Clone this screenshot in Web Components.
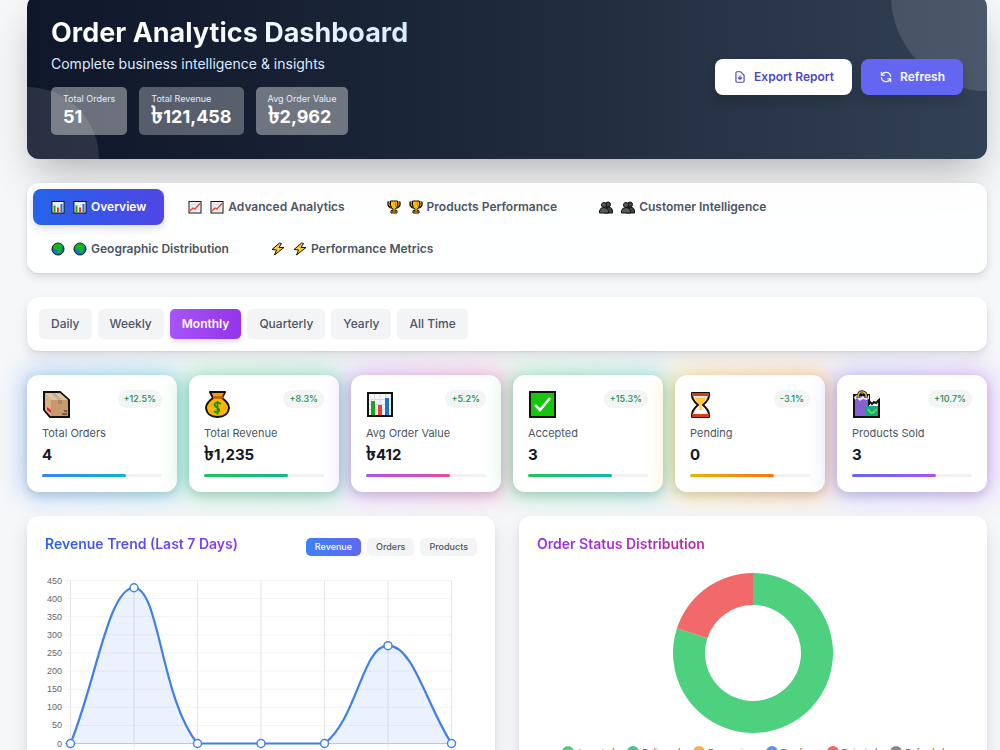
<!DOCTYPE html>
<html lang="en">
<head>
<meta charset="utf-8">
<meta name="viewport" content="width=device-width, initial-scale=1">
<title>Order Analytics Dashboard</title>
<style>
html { background: #f6f7f9; }
body { margin: 0; overflow-x: hidden; font-family: Inter, "Noto Sans", sans-serif; color: #111827; }
</style>
</head>
<body>
<order-dashboard></order-dashboard>

<script>
const EMOJI = {
  chart: `<rect x="2" y="3" width="24" height="23" fill="#f5f5f7" stroke="#111" stroke-width="2"/>
    <path d="M3 9.500H25M3 14.500H25M3 19.500H25M8.500 4V25M14 4V25M19.500 4V25" stroke="#d8dae3" fill="none"/>
    <path d="M5 11H9V25H5Z" fill="#16a81c"/><path d="M12 15H16V25H12Z" fill="#e8402a"/><path d="M19 8H23V25H19Z" fill="#1976d2"/>`,
  trend: `<rect x="2" y="3" width="24" height="23" fill="#f5f5f7" stroke="#111" stroke-width="2"/>
    <path d="M3 9H25M3 14H25M3 19H25M8 4V25M14 4V25M20 4V25" stroke="#c9cdda" fill="none"/>
    <path d="M4 22L10 16L14 18L24 7" fill="none" stroke="#e8402a" stroke-width="2.400"/>`,
  trophy: `<path d="M8 5H3C2 11 5 15 10 15M20 5H25C26 11 23 15 18 15" fill="none" stroke="#111" stroke-width="4.500"/>
    <path d="M8 5H4C3 10 6 14 10 14M20 5H24C25 10 22 14 18 14" fill="none" stroke="#f6a800" stroke-width="1.800"/>
    <path d="M7 2H21V10Q20 16 16 18V21H20V26H8V21H12V18Q8 16 7 10Z" fill="#ffb900" stroke="#111" stroke-width="2"/>
    <path d="M9 22H19V25H9Z" fill="#9a5b12"/><path d="M17 4V13" stroke="#d98200" stroke-width="2"/>`,
  people: `<circle cx="18" cy="9" r="5" fill="#444" stroke="#111" stroke-width="2"/>
    <path d="M10 26V20Q11 14 18 14Q27 15 27 22V26Z" fill="#444" stroke="#111" stroke-width="2"/>
    <circle cx="10" cy="10" r="5" fill="#5a5a5a" stroke="#111" stroke-width="2"/>
    <path d="M1 26V22Q2 15 10 15Q18 15 19 22V26Z" fill="#5a5a5a" stroke="#111" stroke-width="2"/>`,
  globe: `<circle cx="14" cy="14" r="12" fill="#0f75c9" stroke="#111" stroke-width="2"/>
    <path d="M8 5Q14 1 21 5L23 9L21 13L19 20L14 23L12 16L6 14L4 10Z" fill="#16b51c"/><path d="M21 17L23 15L22 20Z" fill="#16b51c"/>`,
  bolt: `<path d="M17 2L2 15L11 16L7 26L26 11L16 11L21 3Z" fill="#ffc83d" stroke="#111" stroke-width="2" stroke-linejoin="round"/>`,
  box: `<path d="M2 2H18L27 10V27H8L2 20Z" fill="#c79a6b" stroke="#111" stroke-width="2"/>
    <path d="M3 3H18L26 10H9Z" fill="#e4c39c"/><path d="M3 3L9 10V26L3 20Z" fill="#d9b188"/>
    <path d="M9 3H13L20 10H16Z" fill="#b9b2a4"/><path d="M16 10H20V14H16Z" fill="#a98661"/>
    <path d="M5 17L9 20V23L5 20Z" fill="#e0203a"/><path d="M20 24H25M22 21H25" stroke="#5d4a38" stroke-width="1.500"/>`,
  money: `<path d="M6 2H21L18 8Q25 13 25 18Q24 27 13.500 27Q3 27 2 18Q2 13 9 8Z" fill="#ffb400" stroke="#111" stroke-width="2" stroke-linejoin="round"/>
    <path d="M9 7.500H19" stroke="#c25a10" stroke-width="2.500"/><path d="M8 3H20L18 6H10Z" fill="#f29a00"/>
    <path d="M17 14Q14 12 11.500 13Q9 15 13 17.500Q17 20 14 22Q12 23 10 21M13.500 11V24.500" fill="none" stroke="#16901c" stroke-width="1.800"/>`,
  check: `<rect x="2" y="2" width="25" height="25" fill="#16c60c" stroke="#111" stroke-width="2"/>
    <path d="M7 15L12 20L22 8" fill="none" stroke="#fff" stroke-width="2.600"/>`,
  hourglass: `<path d="M2 3H19V5Q19 10 13 15Q19 20 19 25V27H2V25Q2 20 8 15Q2 10 2 5Z" fill="#fff4e5" stroke="#111" stroke-width="2" stroke-linejoin="round"/>
    <path d="M2 3H19V6H2ZM2 24H19V27H2Z" fill="#d83b1a"/><path d="M5 8H16Q15 12 11 15V24H10V15Q6 12 5 8Z" fill="#ffc83d" stroke="#ffc83d"/><path d="M5 24Q7 20 10.500 20Q14 20 16 24Z" fill="#fff"/>`,
  bags: `<path d="M2 5H17V27H2Z" fill="#8661d1" stroke="#111" stroke-width="2"/>
    <path d="M13 16H27V27H13Z" fill="#10a982"/><path d="M17 16V12L20 15L22 13L24 14L27 11V16Z" fill="#f4f4f4"/>
    <path d="M17 15V11L20 14L22 12L24 13L27 10V27H13" fill="none" stroke="#111" stroke-width="2"/>
    <path d="M2 7L6 4L8 8L11 6L13 8L17 5V9L14 10L11 9L8 11L5 8L3 10Z" fill="#e9e4f7"/><path d="M6 8Q6 1 11 2Q15 3 14 8" fill="none" stroke="#111" stroke-width="3"/>
    <path d="M6 8Q6 1 11 2Q15 3 14 8" fill="none" stroke="#dfb93a" stroke-width="1.400"/>
    <path d="M16 19Q20 27 24 19" fill="none" stroke="#7be03a" stroke-width="1.600"/>`
};

function define(name, render) {
  customElements.define(name, class extends HTMLElement {
    connectedCallback() {
      if (this.shadowRoot) return;
      const t = document.createElement('template');
      t.innerHTML = render(this);
      this.attachShadow({ mode: 'open' }).append(t.content.cloneNode(true));
    }
  });
}

define('ui-emoji', el => `
  <style>:host { display: inline-block; width: 14px; height: 14px; flex: none; } svg { display: block; width: 100%; height: 100%; }</style>
  <svg viewBox="0 0 28 28" aria-hidden="true">${EMOJI[el.getAttribute('name')]}</svg>`);

// The taka sign is small beside Inter's figures, so it is set a third larger than the amount.
define('taka-amount', () => `
  <style>:host { display: inline; } span { font-size: 133%; line-height: 0; }</style><span>৳</span><slot></slot>`);

define('hero-stat', el => `
  <style>
    :host { display: block; padding: 6px 12px; border-radius: 5px; color: #fff; background: rgba(255,255,255,.38); }
    :host([dim]) { background: rgba(255,255,255,.29); }
    .label { font-size: 9px; line-height: 12px; color: #e8ebf3; }
    .value { font-size: 18px; line-height: 24px; font-weight: 700; }
  </style>
  <div class="label">${el.getAttribute('label')}</div>
  <div class="value"><slot></slot></div>`);

define('action-button', () => `
  <style>
    :host { display: block; }
    button { display: flex; align-items: center; gap: 7px; height: 36px; padding: 0 18px; border: 0; border-radius: 8px;
      background: #fff; color: #4f46c8; font: 600 12px/18px Inter, sans-serif; white-space: nowrap; box-shadow: 0 6px 12px rgba(0,0,0,.15); }
    :host([primary]) button { background: #6366f1; color: #fff; }
    ::slotted(svg) { width: 14px; height: 14px; flex: none; }
  </style>
  <button type="button"><slot name="icon"></slot><slot></slot></button>`);

define('dashboard-hero', () => `
  <style>
    :host { display: flex; align-items: center; justify-content: space-between; gap: 24px; padding: 24px; position: relative;
      border-radius: 12px; background: linear-gradient(90deg, #0f172a, #1e293b 50%, #334155); box-shadow: 0 20px 40px -8px rgba(0,0,0,.28); }
    .decor { position: absolute; inset: 0; overflow: hidden; border-radius: inherit; }
    .decor::before, .decor::after { content: ""; position: absolute; border-radius: 50%; }
    .decor::before { width: 192px; height: 192px; top: -96px; right: -96px; background: rgba(255,255,255,.12); }
    .decor::after { width: 144px; height: 144px; bottom: -72px; left: -72px; background: rgba(255,255,255,.11); }
    .copy, .actions { position: relative; }
    h1 { margin: 0 0 6px; width: fit-content; font-size: 27px; line-height: 28px; font-weight: 700; color: #fff; }
    h1 span { padding-bottom: 4px; background: linear-gradient(90deg, #fff 30%, #dbeafe); -webkit-background-clip: text; background-clip: text; color: transparent; }
    p { margin: 0 0 12px; font-size: 14px; line-height: 22px; color: #dbeafe; }
    .stats { display: flex; gap: 12px; }
    .actions { display: flex; gap: 9px; }
  </style>
  <div class="decor"></div>
  <div class="copy">
    <h1><span>Order Analytics Dashboard</span></h1>
    <p>Complete business intelligence &amp; insights</p>
    <div class="stats">
      <hero-stat label="Total Orders">51</hero-stat>
      <hero-stat label="Total Revenue" dim><taka-amount>121,458</taka-amount></hero-stat>
      <hero-stat label="Avg Order Value"><taka-amount>2,962</taka-amount></hero-stat>
    </div>
  </div>
  <div class="actions">
    <action-button>
      <svg slot="icon" viewBox="0 0 24 24" fill="none" stroke="currentColor" stroke-width="2" stroke-linecap="round" stroke-linejoin="round" aria-hidden="true"><path d="M12 10v6m0 0l-3-3m3 3l3-3M17 21H7a2 2 0 01-2-2V5a2 2 0 012-2h5.600a1 1 0 01.700.300l5.400 5.400a1 1 0 01.300.700V19a2 2 0 01-2 2z"/></svg>
      Export Report</action-button>
    <action-button primary>
      <svg slot="icon" viewBox="0 0 24 24" fill="none" stroke="currentColor" stroke-width="2" stroke-linecap="round" stroke-linejoin="round" aria-hidden="true"><path d="M4 4v5h.600m15.300 2A8 8 0 004.600 9m0 0H9m11 11v-5h-.600m0 0a8 8 0 01-15.300-2m15.300 2H15"/></svg>
      Refresh</action-button>
  </div>`);

define('nav-tab', el => `
  <style>
    :host { display: block; }
    button { display: flex; align-items: center; height: 36px; padding: 0 18px; border: 0; border-radius: 8px; background: none;
      color: #4b5563; font: 600 12px/18px Inter, sans-serif; white-space: nowrap; }
    :host([active]) button { color: #fff; background: linear-gradient(90deg, #2563eb, #4f46e5); box-shadow: 0 4px 8px rgba(0,0,0,.12); }
    ui-emoji:first-child { margin-right: 8px; }
    ui-emoji + ui-emoji { margin-right: 4px; }
  </style>
  <button type="button" role="tab" aria-selected="${el.hasAttribute('active')}"><ui-emoji name="${el.getAttribute('icon')}"></ui-emoji><ui-emoji name="${el.getAttribute('icon')}"></ui-emoji><slot></slot></button>`);

define('nav-tabs', () => `
  <style>:host { display: flex; flex-wrap: wrap; gap: 6px; padding: 6px; position: relative; border-radius: 12px; background: rgba(255,255,255,.9);
    box-shadow: 0 4px 10px rgba(15,23,42,.12), 0 1px 2px rgba(15,23,42,.08); }</style>
  <slot></slot>`);

define('period-button', el => `
  <style>
    :host { display: block; }
    button { height: 30px; padding: 0 12px; border: 0; border-radius: 5px; background: #f3f4f6; color: #4b5563; font: 500 12px/18px Inter, sans-serif; white-space: nowrap; }
    :host([active]) button { color: #fff; font-weight: 600; background: linear-gradient(90deg, #a855f7, #9333ea); box-shadow: 0 3px 5px rgba(0,0,0,.12); }
    :host([small]) button { height: 18px; padding: 0 9px; font-size: 9px; line-height: 12px; font-weight: 500; }
    :host([small][active]) button { background: linear-gradient(90deg, #3b82f6, #6366f1); box-shadow: none; }
  </style>
  <button type="button" aria-pressed="${el.hasAttribute('active')}"><slot></slot></button>`);

define('period-filter', () => `
  <style>:host { display: flex; flex-wrap: wrap; gap: 6px; padding: 12px; position: relative; border-radius: 12px; background: #fff;
    box-shadow: 0 6px 12px rgba(15,23,42,.1), 0 1px 2px rgba(15,23,42,.08); }</style>
  <slot></slot>`);

define('stat-card', el => `
  <style>
    :host { display: block; position: relative; z-index: 0; --from: ${el.getAttribute('from')}; --to: ${el.getAttribute('to')}; }
    :host::before { content: ""; position: absolute; z-index: -1; inset: -4px; border-radius: 14px; opacity: .4; filter: blur(12px); background: linear-gradient(90deg, var(--from), var(--to)); }
    article { padding: 15px; border-radius: 12px; background: #fff; box-shadow: 0 4px 8px rgba(15,23,42,.12); }
    .top { display: flex; justify-content: space-between; align-items: flex-start; height: 28px; margin-bottom: 7px; }
    ui-emoji { width: 28px; height: 28px; }
    .change { padding: 3px 6px; border-radius: 9px; background: #f3f4f6; color: #16914a; font-size: 9px; line-height: 12px; font-weight: 500; }
    .label { font-size: 11px; line-height: 16px; color: #4b5563; }
    .value { margin: 4px 0 9px; font-size: 15px; line-height: 20px; font-weight: 700; }
    .bar { height: 3px; border-radius: 2px; background: #f0f1f3; }
    .bar div { width: 70%; height: 100%; border-radius: 2px; background: linear-gradient(90deg, var(--from), var(--to)); }
  </style>
  <article>
    <div class="top"><ui-emoji name="${el.getAttribute('icon')}"></ui-emoji><span class="change">${el.getAttribute('change')}</span></div>
    <div class="label">${el.getAttribute('label')}</div>
    <div class="value"><slot></slot></div>
    <div class="bar"><div></div></div>
  </article>`);

define('chart-card', el => `
  <style>
    :host { display: block; position: relative; padding: 18px; border-radius: 12px; background: #fff; box-shadow: 0 8px 18px rgba(15,23,42,.1), 0 2px 4px rgba(15,23,42,.04); }
    header { display: flex; align-items: center; justify-content: space-between; height: 22px; margin-bottom: 17px; }
    h2 { margin: 0; font-size: 14px; line-height: 20px; padding-bottom: 2px; font-weight: 600; color: transparent; -webkit-background-clip: text; background-clip: text;
      background-image: linear-gradient(90deg, ${el.getAttribute('from')}, ${el.getAttribute('to')}); }
    .tools { display: flex; gap: 6px; }
  </style>
  <header><h2>${el.getAttribute('heading')}</h2><div class="tools"><slot name="tools"></slot></div></header>
  <slot></slot>`);

define('revenue-chart', () => {
  const left = 25.5, step = 63.5, top = 7.5, bottom = 170.5, max = 450;
  const values = [0, 430, 0, 0, 0, 270, 0];
  const pts = values.map((v, i) => [left + i * step, bottom - v / max * (bottom - top)]);
  const clamp = y => Math.min(bottom, Math.max(top, y));
  const dist = (a, b) => Math.hypot(b[0] - a[0], b[1] - a[1]);
  // Smooth spline: control arms follow the neighbours' direction and stay inside the plot area.
  const arms = pts.map((p, i) => {
    const a = pts[i - 1] || p, b = pts[i + 1] || p;
    const d1 = dist(a, p), d2 = dist(p, b), f1 = .4 * d1 / (d1 + d2), f2 = .4 * d2 / (d1 + d2);
    return [[p[0] - f1 * (b[0] - a[0]), clamp(p[1] - f1 * (b[1] - a[1]))], [p[0] + f2 * (b[0] - a[0]), clamp(p[1] + f2 * (b[1] - a[1]))]];
  });
  let d = `M${pts[0]}`;
  for (let i = 1; i < pts.length; i++) d += `C${arms[i - 1][1]} ${arms[i][0]} ${pts[i]}`;
  let grid = '', labels = '';
  for (let v = 0; v <= max; v += 50) {
    const y = bottom - v / max * (bottom - top);
    grid += `<path d="M${left - 6} ${y}H${left + 6 * step}" stroke="${v ? '#f3f3f3' : '#ccc'}"/>`;
    labels += `<text x="17" y="${y + 3}" text-anchor="end">${v}</text>`;
  }
  pts.forEach(p => grid += `<path d="M${p[0]} ${top}V${bottom + 6}" stroke="#e5e5e5"/>`);
  return `
  <style>:host { display: block; } svg { display: block; width: 100%; height: auto; } text { font: 9px "Liberation Sans", Arial, sans-serif; fill: #666; }</style>
  <svg viewBox="0 0 432 200" role="img" aria-label="Revenue over the last 7 days">
    ${grid}${labels}
    <path d="${d}Z" fill="#3b82f6" fill-opacity=".1"/>
    <path d="${d}" fill="none" stroke="#3f7fe8" stroke-width="2.200"/>
    ${pts.map(p => `<circle cx="${p[0]}" cy="${p[1]}" r="4" fill="#fff" stroke="#4683e0" stroke-width="1.500"/>`).join('')}
  </svg>`;
});

define('status-chart', () => {
  const arc = (from, to, color) => {
    const at = (r, deg) => { const a = (deg - 90) * Math.PI / 180; return `${80 + r * Math.cos(a)} ${80 + r * Math.sin(a)}`; };
    const big = to - from > 180 ? 1 : 0;
    return `<path fill="${color}" d="M${at(80, from)}A80 80 0 ${big} 1 ${at(80, to)}L${at(48, to)}A48 48 0 ${big} 0 ${at(48, from)}Z"/>`;
  };
  const legend = [['Accepted', '#4ed17e'], ['Delivered', '#40c79a'], ['Processing', '#f7b13c'], ['Pending', '#628ff8'], ['Rejected', '#ee6868'], ['Refunded', '#83868f']];
  return `
  <style>
    :host { display: block; }
    svg { display: block; width: 160px; height: 160px; margin: 0 auto 13px; }
    ul { display: flex; justify-content: center; gap: 13px; margin: 0; padding: 0; list-style: none; font: 9px/12px "Liberation Sans", Arial, sans-serif; color: #666; }
    li { display: flex; align-items: center; gap: 3px; }
    i { width: 12px; height: 12px; border-radius: 50%; background: var(--c); }
  </style>
  <svg viewBox="0 0 160 160" role="img" aria-label="Accepted 80%, rejected 20%">${arc(0, 288, '#4ed17e')}${arc(288, 360, '#f26969')}</svg>
  <ul>${legend.map(([n, c]) => `<li><i style="--c:${c}"></i>${n}</li>`).join('')}</ul>`;
});

define('order-dashboard', () => `
  <style>
    :host { display: flex; flex-direction: column; gap: 24px; margin-top: -5px; padding: 0 13px 24px 27px; }
    .stats { display: grid; grid-template-columns: repeat(6, 1fr); gap: 12px; }
    .charts { display: grid; grid-template-columns: 1fr 1fr; gap: 24px; }
  </style>
  <dashboard-hero></dashboard-hero>
  <nav-tabs role="tablist">
    <nav-tab icon="chart" active>Overview</nav-tab>
    <nav-tab icon="trend">Advanced Analytics</nav-tab>
    <nav-tab icon="trophy">Products Performance</nav-tab>
    <nav-tab icon="people">Customer Intelligence</nav-tab>
    <nav-tab icon="globe">Geographic Distribution</nav-tab>
    <nav-tab icon="bolt">Performance Metrics</nav-tab>
  </nav-tabs>
  <period-filter>
    <period-button>Daily</period-button>
    <period-button>Weekly</period-button>
    <period-button active>Monthly</period-button>
    <period-button>Quarterly</period-button>
    <period-button>Yearly</period-button>
    <period-button>All Time</period-button>
  </period-filter>
  <section class="stats">
    <stat-card icon="box" label="Total Orders" change="+12.5%" from="#3b82f6" to="#06b6d4">4</stat-card>
    <stat-card icon="money" label="Total Revenue" change="+8.3%" from="#22c55e" to="#10b981"><taka-amount>1,235</taka-amount></stat-card>
    <stat-card icon="chart" label="Avg Order Value" change="+5.2%" from="#a855f7" to="#ec4899"><taka-amount>412</taka-amount></stat-card>
    <stat-card icon="check" label="Accepted" change="+15.3%" from="#22c55e" to="#14b8a6">3</stat-card>
    <stat-card icon="hourglass" label="Pending" change="-3.1%" from="#eab308" to="#f97316">0</stat-card>
    <stat-card icon="bags" label="Products Sold" change="+10.7%" from="#6366f1" to="#a855f7">3</stat-card>
  </section>
  <section class="charts">
    <chart-card heading="Revenue Trend (Last 7 Days)" from="#2563eb" to="#9333ea">
      <period-button slot="tools" small active>Revenue</period-button>
      <period-button slot="tools" small>Orders</period-button>
      <period-button slot="tools" small>Products</period-button>
      <revenue-chart></revenue-chart>
    </chart-card>
    <chart-card heading="Order Status Distribution" from="#9333ea" to="#c026a3">
      <status-chart></status-chart>
    </chart-card>
  </section>`);
</script>
</body>
</html>
